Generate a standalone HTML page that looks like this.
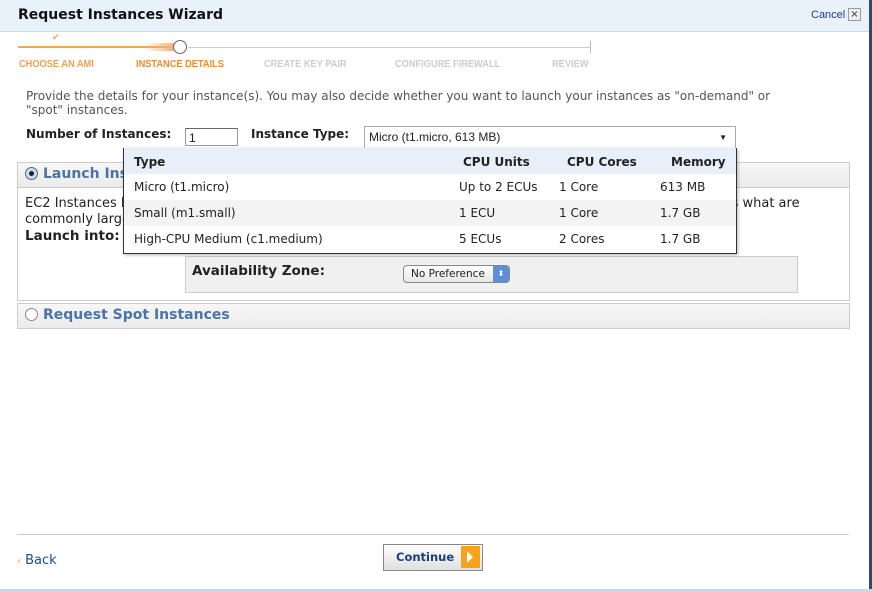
<!DOCTYPE html>
<html><head><style>
body{margin:0;width:872px;height:592px;position:relative;overflow:hidden;background:#fff;font-family:Verdana,"DejaVu Sans",sans-serif;font-size:12px;color:#222}
.a{position:absolute}
</style></head><body>
<div class="a" style="left:0;top:0;width:870px;height:31px;background:#e9f1fb;border-bottom:1px solid #c9d9ee"></div>
<div class="a" style="left:18px;top:7px;font-weight:bold;font-size:14px;color:#111">Request Instances Wizard</div>
<div class="a" style="left:811px;top:9px;font-family:'Liberation Sans',Arial,sans-serif;font-size:11px;color:#1a3f8f">Cancel</div>
<div class="a" style="left:848px;top:8px;width:11px;height:11px;border:1px solid #999;background:#eee;font-size:10px;line-height:11px;text-align:center;color:#333">×</div>
<div class="a" style="left:869px;top:0;width:3px;height:592px;background:#2d4a6e"></div>
<div class="a" style="left:0;top:589px;width:872px;height:3px;background:#c9d7e6"></div>
<!-- progress -->
<div class="a" style="left:52px;top:33px;font-size:9px;color:#f0a050">✔</div>
<div class="a" style="left:18px;top:46px;width:155px;height:2px;background:#f3a55a"></div>
<div class="a" style="left:145px;top:43px;width:29px;height:8px;background:linear-gradient(90deg,rgba(246,192,138,0),#f6b070)"></div>
<div class="a" style="left:173px;top:40px;width:12px;height:12px;border:1.5px solid #666;border-radius:50%;background:#fff"></div>
<div class="a" style="left:188px;top:47px;width:403px;height:1px;background:#ccc"></div>
<div class="a" style="left:590px;top:41px;width:1px;height:12px;background:#bbb"></div>
<div class="a" style="left:19px;top:58px;font-family:'Liberation Sans',Arial,sans-serif;font-size:10.5px;font-weight:bold;color:#f0a050;transform:scaleX(.88);transform-origin:left">CHOOSE AN AMI</div>
<div class="a" style="left:136px;top:58px;font-family:'Liberation Sans',Arial,sans-serif;font-size:10.5px;font-weight:bold;color:#f08a2a;transform:scaleX(.88);transform-origin:left">INSTANCE DETAILS</div>
<div class="a" style="left:264px;top:58px;font-family:'Liberation Sans',Arial,sans-serif;font-size:10.5px;font-weight:bold;color:#ccc;transform:scaleX(.88);transform-origin:left">CREATE KEY PAIR</div>
<div class="a" style="left:395px;top:58px;font-family:'Liberation Sans',Arial,sans-serif;font-size:10.5px;font-weight:bold;color:#ccc;transform:scaleX(.88);transform-origin:left">CONFIGURE FIREWALL</div>
<div class="a" style="left:552px;top:58px;font-family:'Liberation Sans',Arial,sans-serif;font-size:10.5px;font-weight:bold;color:#ccc;transform:scaleX(.88);transform-origin:left">REVIEW</div>
<div class="a" style="left:26px;top:89px;width:780px;font-size:12px;color:#555;line-height:14px">Provide the details for your instance(s). You may also decide whether you want to launch your instances as "on-demand" or "spot" instances.</div>
<div class="a" style="left:26px;top:127px;font-weight:bold">Number of Instances:</div>
<div class="a" style="left:185px;top:128px;height:18px;border:1px solid #999;border-top-color:#666;font-family:Arial,'Liberation Sans';font-size:12px;line-height:18px;padding-left:3px;box-sizing:border-box;width:53px">1</div>
<div class="a" style="left:251px;top:127px;font-weight:bold">Instance Type:</div>
<div class="a" style="left:364px;top:126px;width:372px;height:23px;border:1px solid #aaa;box-sizing:border-box;font-family:Arial,'Liberation Sans';font-size:12px;line-height:21px;padding-left:4px">Micro (t1.micro, 613 MB)<span style="position:absolute;right:8px;top:0;font-size:8px">▼</span></div>
<!-- launch panel -->
<div class="a" style="left:17px;top:162px;width:831px;height:137px;border:1px solid #ccc"></div>
<div class="a" style="left:18px;top:163px;width:831px;height:24px;background:linear-gradient(#f7f7f7,#ebebeb);border-bottom:1px solid #ccc"></div>
<div class="a" style="left:25px;top:167px;width:11px;height:11px;border:1px solid #567;border-radius:50%;background:#cde"><div style="margin:3px;width:5px;height:5px;border-radius:50%;background:#123"></div></div>
<div class="a" style="left:43px;top:166px;font-weight:bold;font-size:14px;color:#4a74a8">Launch Instances</div>
<div class="a" style="left:25px;top:196px;width:820px;color:#222;line-height:16px;font-size:13px">EC2 Instances let you pay for compute capacity by the hour with no long term commitments. This transforms what are<br>commonly large fixed costs into much smaller variable costs.</div>
<div class="a" style="left:25px;top:228px;font-weight:bold;font-size:13.5px">Launch into:</div>
<div class="a" style="left:185px;top:256px;width:611px;height:35px;background:#f0f0f0;border:1px solid #ccc"></div>
<div class="a" style="left:192px;top:263px;font-weight:bold;font-size:13.5px">Availability Zone:</div>
<div class="a" style="left:403px;top:265px;border:1px solid #888;border-radius:4px;background:linear-gradient(#fff,#e6e6e6);font-size:10.5px;line-height:16px;padding-left:7px;box-sizing:border-box;width:107px;height:18px">No Preference<span style="position:absolute;right:0;top:0;width:16px;height:16px;background:#5b8fd8;border-radius:0 3px 3px 0;color:#fff;font-size:8px;text-align:center;line-height:16px">⬍</span></div>
<!-- spot -->
<div class="a" style="left:17px;top:303px;width:831px;height:24px;border:1px solid #ccc;background:linear-gradient(#f7f7f7,#ebebeb)"></div>
<div class="a" style="left:25px;top:308px;width:11px;height:11px;border:1px solid #888;border-radius:50%;background:#fff"></div>
<div class="a" style="left:43px;top:307px;font-weight:bold;font-size:14px;color:#4a74a8">Request Spot Instances</div>
<!-- dropdown -->
<div class="a" style="left:123px;top:148px;width:612px;height:105px;border:1px solid #333;border-top:none;background:#fff;box-shadow:1px 1px 3px rgba(0,0,0,.3);font-size:12px">
<div style="position:absolute;left:0;top:0;width:100%;height:26px;background:#e8eff9"></div>
<div style="position:absolute;left:0;top:52px;width:100%;height:26px;background:#f3f3f3"></div>
<div style="position:absolute;left:10px;top:7px;font-weight:bold">Type</div>
<div style="position:absolute;left:339px;top:7px;font-weight:bold">CPU Units</div>
<div style="position:absolute;left:443px;top:7px;font-weight:bold">CPU Cores</div>
<div style="position:absolute;left:547px;top:7px;font-weight:bold">Memory</div>
<div style="position:absolute;left:10px;top:32px">Micro (t1.micro)</div><div style="position:absolute;left:335px;top:32px">Up to 2 ECUs</div><div style="position:absolute;left:435px;top:32px">1 Core</div><div style="position:absolute;left:536px;top:32px">613 MB</div>
<div style="position:absolute;left:10px;top:58px">Small (m1.small)</div><div style="position:absolute;left:335px;top:58px">1 ECU</div><div style="position:absolute;left:435px;top:58px">1 Core</div><div style="position:absolute;left:536px;top:58px">1.7 GB</div>
<div style="position:absolute;left:10px;top:84px">High-CPU Medium (c1.medium)</div><div style="position:absolute;left:335px;top:84px">5 ECUs</div><div style="position:absolute;left:435px;top:84px">2 Cores</div><div style="position:absolute;left:536px;top:84px">1.7 GB</div>
</div>
<!-- footer -->
<div class="a" style="left:17px;top:534px;width:832px;height:1px;background:#ccc"></div>
<div class="a" style="left:17px;top:553px;font-size:13px;color:#1a4a8f"><span style="color:#f0a050;font-size:10px">‹</span> Back</div>
<div class="a" style="left:383px;top:544px;width:98px;height:25px;border:1px solid #888;background:linear-gradient(#fdfdfd,#e0e0e0)"></div>
<div class="a" style="left:396px;top:550px;font-weight:bold;font-size:11.5px;color:#1a3f7f">Continue</div>
<div class="a" style="left:461px;top:546px;width:19px;height:22px;background:#f7a21b"><div style="margin:5px 0 0 6px;width:0;height:0;border-top:6px solid transparent;border-bottom:6px solid transparent;border-left:6px solid #fff"></div></div>
</body></html>
